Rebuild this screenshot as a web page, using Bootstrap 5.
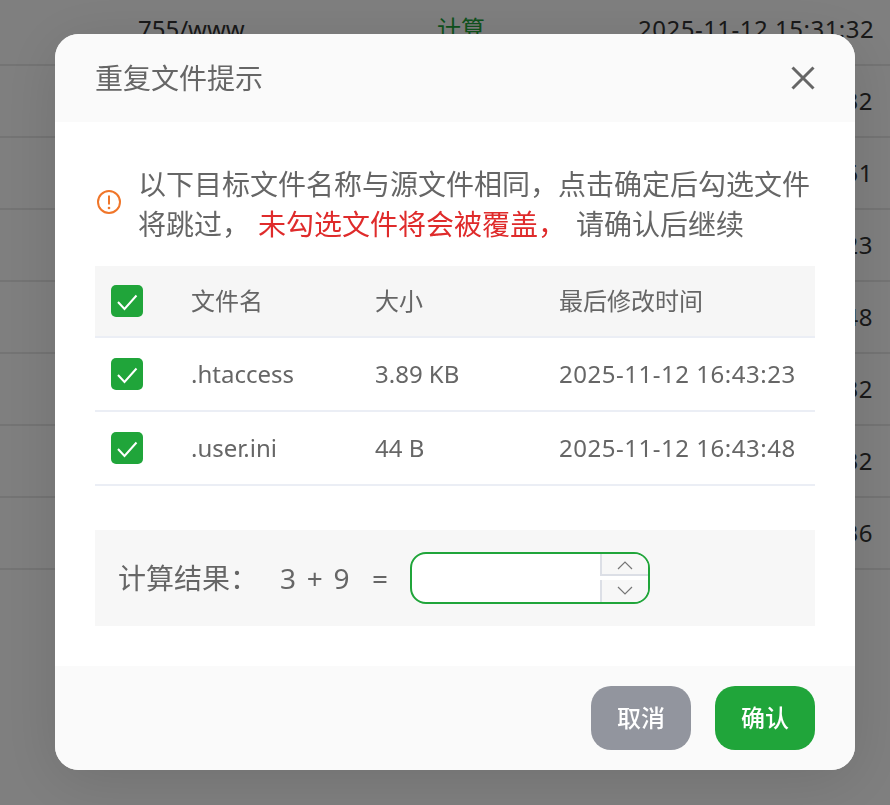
<!DOCTYPE html>
<html lang="zh-CN">
<head>
  <meta charset="UTF-8">
  <title>重复文件提示</title>
  <link href="https://cdn.jsdelivr.net/npm/bootstrap@5.3.3/dist/css/bootstrap.min.css" rel="stylesheet">
  <style>
    html, body {
      height: 805px;
      overflow: hidden;
    }
    body {
      font-family: "Noto Sans", "Noto Sans CJK SC", sans-serif;
      background-color: #fff;
      color: #666;
    }
    .page-rows {
      height: 805px;
      overflow: hidden;
      margin-top: -6px;
    }
    .page-row {
      height: 72px;
      border-bottom: 2px solid #e8e8e8;
      font-size: 24px;
      color: #333;
      white-space: nowrap;
    }
    .page-row .col-path { margin-left: 138px; width: 299px; }
    .page-row .col-type { width: 201px; color: #20a53a; }
    .page-row .col-time { width: 235px; text-align: right; letter-spacing: .5px; }
    .dim-layer {
      position: fixed;
      inset: 0;
      background-color: rgba(0, 0, 0, .5);
    }
    .dup-dialog {
      position: fixed;
      left: 55px;
      top: 34px;
      width: 800px;
      height: 736px;
      border-radius: 24px;
      background-color: #fff;
      box-shadow: 0 10px 60px rgba(0, 0, 0, .12);
      overflow: hidden;
    }
    .dup-head {
      height: 88px;
      padding: 0 40px;
      background-color: #fafafa;
      font-size: 28px;
    }
    .dup-close {
      border: 0;
      padding: 0;
      background: none;
      line-height: 0;
    }
    .dup-body {
      height: 544px;
      padding: 42px 40px 0;
    }
    .dup-notice {
      font-size: 28px;
      line-height: 40px;
      margin-bottom: 22px;
    }
    .dup-notice-icon {
      width: 28px;
      flex: none;
      margin-right: 15px;
      margin-top: -5px;
      padding-left: 2px;
    }
    .dup-notice b {
      font-weight: 400;
      color: #df2b2b;
      margin: 0 10px 0 8px;
    }
    .dup-files {
      font-size: 24px;
      color: #666;
      margin-bottom: 44px;
    }
    .dup-files th, .dup-files td {
      height: 74px;
      padding: 0;
      font-weight: 400;
      color: #666;
      vertical-align: middle;
      border-bottom: 2px solid #ebeef5;
      background-color: transparent;
      box-shadow: none;
    }
    .dup-files th {
      height: 71px;
      background-color: #f6f6f6;
    }
    .dup-files .cell-time { letter-spacing: .53px; }
    .cell-check { width: 96px; padding-left: 16px !important; }
    .cell-name { width: 184px; }
    .cell-size { width: 184px; }
    .green-check {
      display: block;
      width: 32px;
      height: 32px;
      border-radius: 5px;
      background-color: #20a53a;
    }
    .calc-box {
      height: 96px;
      padding-left: 23px;
      background-color: #f7f7f7;
      font-size: 28px;
    }
    .calc-label { width: 162px; }
    .calc-sum { width: 92px; word-spacing: 3.500px; }
    .calc-eq { width: 38px; }
    .calc-input {
      width: 240px;
      height: 52px;
      border: 2px solid #20a53a;
      border-radius: 16px;
      background-color: #fff;
      overflow: hidden;
    }
    .calc-spin {
      width: 48px;
      flex: none;
    }
    .calc-spin span {
      display: flex;
      align-items: center;
      justify-content: center;
      height: 22px;
      border-left: 2px solid #dcdfe6;
      background-color: #f7f7f7;
    }
    .calc-spin span:first-child {
      padding-top: 2px;
      border-bottom: 2px solid #dcdfe6;
    }
    .calc-spin span:last-child {
      margin-top: 4px;
    }
    .dup-foot {
      height: 104px;
      padding: 20px 40px;
      background-color: #fafafa;
    }
    .dup-btn {
      width: 100px;
      height: 64px;
      padding: 0;
      border: 0;
      border-radius: 20px;
      font-size: 24px;
      font-weight: 500;
      color: #fff;
    }
    .dup-btn-cancel { background-color: #92959e; }
    .dup-btn-ok { background-color: #20a53a; }
  </style>
</head>
<body>
  <div class="page-rows" id="page-rows"></div>
  <div class="dim-layer"></div>

  <div class="dup-dialog">
    <div class="dup-head d-flex align-items-center justify-content-between">
      <span>重复文件提示</span>
      <button class="dup-close" type="button" aria-label="关闭">
        <svg width="24" height="24" viewBox="0 0 24 24"><path d="M1.500 1.500 22.500 22.500M22.500 1.500 1.500 22.500" fill="none" stroke="#666" stroke-width="3"/></svg>
      </button>
    </div>

    <div class="dup-body">
      <div class="dup-notice d-flex align-items-center">
        <span class="dup-notice-icon">
          <svg class="d-block" width="24" height="24" viewBox="0 0 24 24"><circle cx="12" cy="12" r="11" fill="none" stroke="#f0762a" stroke-width="2"/><path d="M12 5.500v9" stroke="#f0762a" stroke-width="2"/><circle cx="12" cy="18" r="1.300" fill="#f0762a"/></svg>
        </span>
        <div>
          <div>以下目标文件名称与源文件相同，点击确定后勾选文件</div>
          <div>将跳过，<b>未勾选文件将会被覆盖，</b>请确认后继续</div>
        </div>
      </div>

      <table class="dup-files w-100">
        <thead>
          <tr>
            <th class="cell-check"><span class="green-check"><svg class="d-block" width="32" height="32" viewBox="0 0 32 32"><path d="M7 17 13.500 24 25.500 10.500" fill="none" stroke="#fff" stroke-width="2"/></svg></span></th>
            <th class="cell-name">文件名</th>
            <th class="cell-size">大小</th>
            <th>最后修改时间</th>
          </tr>
        </thead>
        <tbody>
          <tr>
            <td class="cell-check"><span class="green-check"><svg class="d-block" width="32" height="32" viewBox="0 0 32 32"><path d="M7 17 13.500 24 25.500 10.500" fill="none" stroke="#fff" stroke-width="2"/></svg></span></td>
            <td>.htaccess</td>
            <td>3.89 KB</td>
            <td class="cell-time">2025-11-12 16:43:23</td>
          </tr>
          <tr>
            <td class="cell-check"><span class="green-check"><svg class="d-block" width="32" height="32" viewBox="0 0 32 32"><path d="M7 17 13.500 24 25.500 10.500" fill="none" stroke="#fff" stroke-width="2"/></svg></span></td>
            <td>.user.ini</td>
            <td>44 B</td>
            <td class="cell-time">2025-11-12 16:43:48</td>
          </tr>
        </tbody>
      </table>

      <div class="calc-box d-flex align-items-center">
        <span class="calc-label">计算结果：</span>
        <span class="calc-sum">3 + 9</span>
        <span class="calc-eq">=</span>
        <div class="calc-input d-flex">
          <div class="flex-grow-1"></div>
          <div class="calc-spin">
            <span><svg width="16" height="10" viewBox="0 0 16 10"><path d="M1 9 8 2l7 7" fill="none" stroke="#777" stroke-width="1.200"/></svg></span>
            <span><svg width="16" height="10" viewBox="0 0 16 10"><path d="M1 1l7 7 7-7" fill="none" stroke="#777" stroke-width="1.200"/></svg></span>
          </div>
        </div>
      </div>
    </div>

    <div class="dup-foot d-flex justify-content-end gap-4">
      <button class="btn dup-btn dup-btn-cancel" type="button">取消</button>
      <button class="btn dup-btn dup-btn-ok" type="button">确认</button>
    </div>
  </div>

  <script>
    // rows behind the dialog: only the part that sticks out is written
    const pageRows = document.getElementById("page-rows");
    const times = ["2025-11-12 15:31:32", "32", "51", "23", "48", "32", "32", "36"];

    times.forEach((time, i) => {
      const row = document.createElement("div");
      row.className = "page-row d-flex align-items-center";
      const path = i === 0 ? "755/www" : "";
      const type = i === 0 ? "计算" : "";
      row.innerHTML = `<div class="col-path">${path}</div><div class="col-type">${type}</div><div class="col-time">${time}</div>`;
      pageRows.appendChild(row);
    });
  </script>
  <script src="https://cdn.jsdelivr.net/npm/bootstrap@5.3.3/dist/js/bootstrap.bundle.min.js"></script>
</body>
</html>
